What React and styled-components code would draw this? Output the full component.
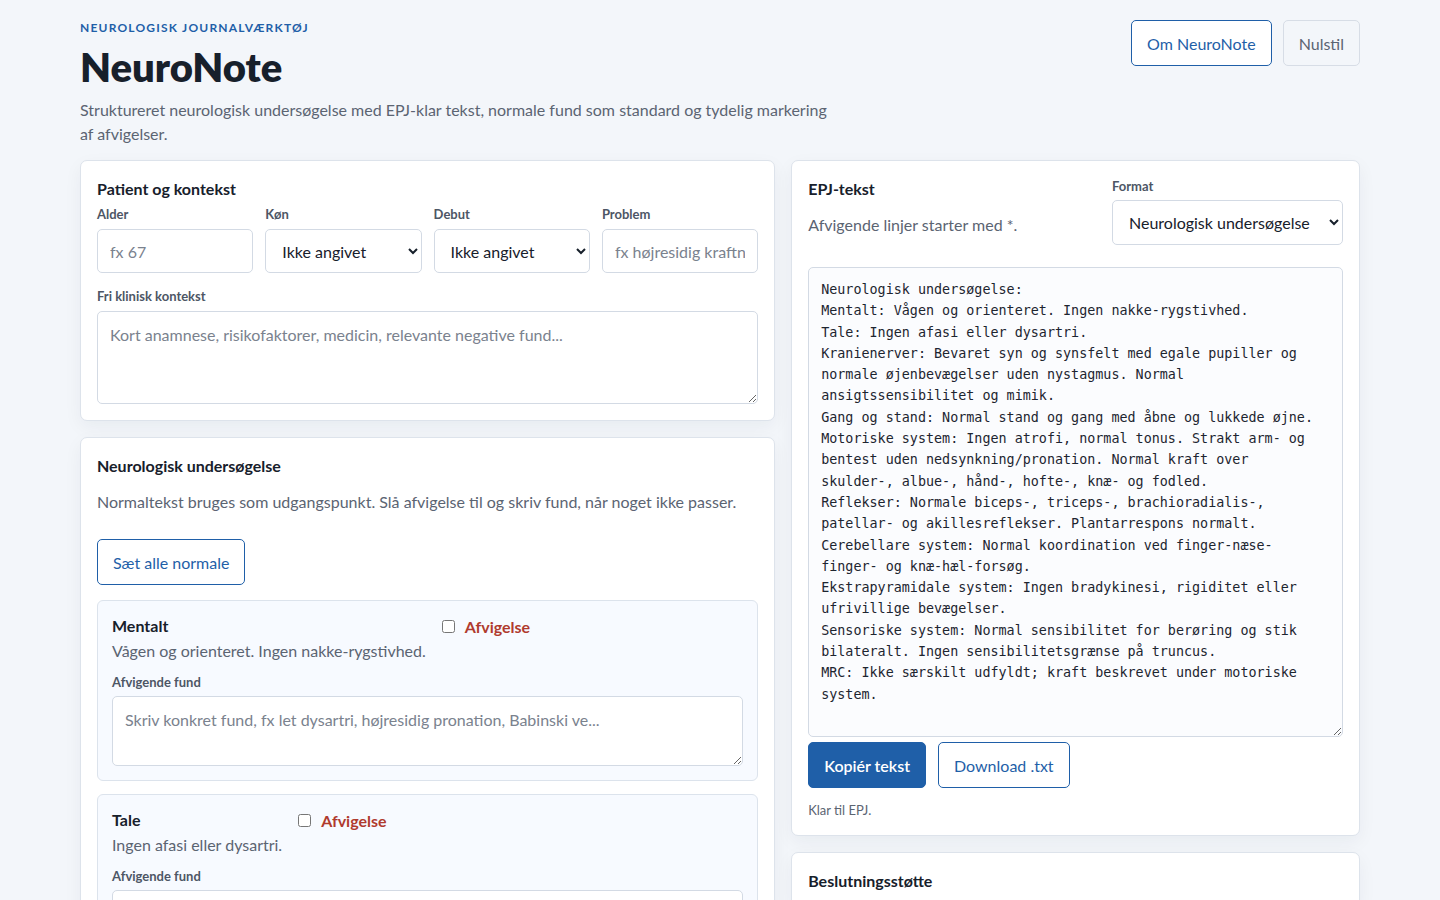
import React from 'react'
import styled, { createGlobalStyle } from 'styled-components'

const GlobalStyle = createGlobalStyle`
    * { box-sizing: border-box; }
    body {
        margin: 0;
        background: #f3f6fa;
        color: #17202b;
        font-family: Lato, "Noto Sans", sans-serif;
    }
`

const Page = styled.div`
    max-width: 1280px;
    margin: 0 auto;
    padding: 20px 0 40px;
`

const Header = styled.header`
    display: flex;
    justify-content: space-between;
    align-items: flex-start;
    margin-bottom: 14px;
`

const Intro = styled.div`
    max-width: 760px;
`

const Eyebrow = styled.div`
    font-size: 12px;
    line-height: 16px;
    font-weight: 700;
    letter-spacing: 0.1em;
    text-transform: uppercase;
    color: #1f5fa8;
`

const Title = styled.h1`
    margin: 9px 0 0;
    font-size: 40px;
    line-height: 44px;
    font-weight: 800;
    color: #17202b;
`

const Lead = styled.p`
    margin: 9px 0 0;
    font-size: 16px;
    line-height: 24px;
    color: #5b6472;
`

const HeaderActions = styled.div`
    display: flex;
    gap: 11px;
`

const Button = styled.button`
    height: 46px;
    padding: 0 15px;
    border-radius: 5px;
    font-family: inherit;
    font-size: 16px;
    cursor: pointer;
    border: 1px solid ${p => p.$variant === 'ghost' ? '#d7dde6' : '#1f5fa8'};
    background: ${p => p.$variant === 'primary' ? '#1f5fa8' : p.$variant === 'ghost' ? '#f3f6fa' : '#fff'};
    color: ${p => p.$variant === 'primary' ? '#fff' : p.$variant === 'ghost' ? '#5b6472' : '#1f5fa8'};
    font-weight: ${p => p.$variant === 'primary' ? 600 : 400};
`

const Columns = styled.div`
    display: grid;
    grid-template-columns: minmax(0, 1.1fr) minmax(360px, 0.9fr);
    gap: 16px;
    align-items: start;
`

const Stack = styled.div`
    display: flex;
    flex-direction: column;
    gap: 16px;
`

const Card = styled.section`
    background: #fff;
    border: 1px solid #dde3eb;
    border-radius: 7px;
    padding: 16px;
    box-shadow: 0 6px 18px rgba(20, 35, 60, 0.05);
`

const CardTitle = styled.h2`
    margin: 0;
    font-size: 16px;
    line-height: 24px;
    font-weight: 700;
    color: #17202b;
`

const Muted = styled.p`
    margin: ${p => p.$m || '12px 0 0'};
    font-size: ${p => p.$small ? '13px' : '16px'};
    line-height: ${p => p.$small ? '18px' : '24px'};
    color: #5b6472;
`

const FieldGrid = styled.div`
    display: grid;
    grid-template-columns: repeat(4, minmax(0, 1fr));
    gap: 12px;
    margin-top: 4px;
`

const Field = styled.label`
    display: flex;
    flex-direction: column;
    gap: 6px;
    margin-top: ${p => p.$top || '0'};
`

const Label = styled.span`
    font-size: 13px;
    line-height: 18px;
    font-weight: 700;
    color: #4d5665;
`

const Input = styled.input`
    height: 44px;
    padding: 0 12px;
    border: 1px solid #d3dae4;
    border-radius: 5px;
    font-family: inherit;
    font-size: 16px;
    color: #17202b;
    background: #fff;
    &::placeholder { color: #7a828e; }
`

const Select = styled.select`
    height: ${p => p.$h || '44px'};
    padding: 0 12px;
    border: 1px solid #d3dae4;
    border-radius: 5px;
    font-family: inherit;
    font-size: 16px;
    color: #17202b;
    background: #fff;
`

const TextArea = styled.textarea`
    display: block;
    width: 100%;
    height: ${p => p.$h};
    padding: 12px;
    border: 1px solid #d3dae4;
    border-radius: 5px;
    font-family: inherit;
    font-size: 16px;
    line-height: 22px;
    color: #17202b;
    background: #fff;
    resize: vertical;
    &::placeholder { color: #7a828e; }
`

const Output = styled(TextArea)`
    font-family: "DejaVu Sans Mono", "Liberation Mono", monospace;
    font-size: 13.4px;
    line-height: 21.3px;
    background: #fbfcfe;
    color: #1d2530;
    padding: 11px 20px 11px 12px;
`

const Finding = styled.div`
    background: #f7faff;
    border: 1px solid #dce3ec;
    border-radius: 6px;
    padding: 13px 14px 14px;
    margin-top: ${p => p.$top || '14px'};
`

const FindingHead = styled.div`
    display: flex;
    align-items: flex-start;
    gap: 16px;
`

const FindingName = styled.div`
    font-size: 16px;
    line-height: 24px;
    font-weight: 700;
    color: #17202b;
`

const FindingNormal = styled.div`
    font-size: 16px;
    line-height: 25px;
    color: #5b6472;
`

const Deviation = styled.label`
    display: flex;
    align-items: center;
    gap: 10px;
    height: 24px;
    font-size: 16px;
    font-weight: 700;
    color: #b03a2e;
    input { margin: 0; width: 13px; height: 13px; }
`

const FindingField = styled(Field)`
    margin-top: 10px;
    gap: 5px;
`

const EpjHead = styled.div`
    display: flex;
    justify-content: space-between;
    align-items: flex-start;
    margin-bottom: 22px;
`

const FormatBox = styled.label`
    display: flex;
    flex-direction: column;
    gap: 5px;
    width: 231px;
`

const ButtonRow = styled.div`
    display: flex;
    gap: 12px;
    margin-top: 5px;
`

const epj = `Neurologisk undersøgelse:
Mentalt: Vågen og orienteret. Ingen nakke-rygstivhed.
Tale: Ingen afasi eller dysartri.
Kranienerver: Bevaret syn og synsfelt med egale pupiller og normale øjenbevægelser uden nystagmus. Normal ansigtssensibilitet og mimik.
Gang og stand: Normal stand og gang med åbne og lukkede øjne.
Motoriske system: Ingen atrofi, normal tonus. Strakt arm- og bentest uden nedsynkning/pronation. Normal kraft over skulder-, albue-, hånd-, hofte-, knæ- og fodled.
Reflekser: Normale biceps-, triceps-, brachioradialis-, patellar- og akillesreflekser. Plantarrespons normalt.
Cerebellare system: Normal koordination ved finger-næse-finger- og knæ-hæl-forsøg.
Ekstrapyramidale system: Ingen bradykinesi, rigiditet eller ufrivillige bevægelser.
Sensoriske system: Normal sensibilitet for berøring og stik bilateralt. Ingen sensibilitetsgrænse på truncus.
MRC: Ikke særskilt udfyldt; kraft beskrevet under motoriske system.`

const findings = [
    { name: 'Mentalt', normal: 'Vågen og orienteret. Ingen nakke-rygstivhed.' },
    { name: 'Tale', normal: 'Ingen afasi eller dysartri.' },
]

const App = () => (
    <>
        <GlobalStyle />
        <Page>
            <Header>
                <Intro>
                    <Eyebrow>Neurologisk journalværktøj</Eyebrow>
                    <Title>NeuroNote</Title>
                    <Lead>
                        Struktureret neurologisk undersøgelse med EPJ-klar tekst, normale fund som standard og tydelig markering af afvigelser.
                    </Lead>
                </Intro>
                <HeaderActions>
                    <Button>Om NeuroNote</Button>
                    <Button $variant="ghost">Nulstil</Button>
                </HeaderActions>
            </Header>

            <Columns>
                <Stack>
                    <Card>
                        <CardTitle>Patient og kontekst</CardTitle>
                        <FieldGrid>
                            <Field>
                                <Label>Alder</Label>
                                <Input placeholder="fx 67" />
                            </Field>
                            <Field>
                                <Label>Køn</Label>
                                <Select defaultValue="na">
                                    <option value="na">Ikke angivet</option>
                                </Select>
                            </Field>
                            <Field>
                                <Label>Debut</Label>
                                <Select defaultValue="na">
                                    <option value="na">Ikke angivet</option>
                                </Select>
                            </Field>
                            <Field>
                                <Label>Problem</Label>
                                <Input placeholder="fx højresidig kraftnedsættelse" />
                            </Field>
                        </FieldGrid>
                        <Field $top="14px">
                            <Label>Fri klinisk kontekst</Label>
                            <TextArea $h="93px" placeholder="Kort anamnese, risikofaktorer, medicin, relevante negative fund..." />
                        </Field>
                    </Card>

                    <Card>
                        <CardTitle>Neurologisk undersøgelse</CardTitle>
                        <Muted>Normaltekst bruges som udgangspunkt. Slå afvigelse til og skriv fund, når noget ikke passer.</Muted>
                        <Button style={{ marginTop: 25 }}>Sæt alle normale</Button>
                        {findings.map((f, i) => (
                            <Finding key={f.name} $top={i === 0 ? '15px' : '13px'}>
                                <FindingHead>
                                    <div>
                                        <FindingName>{f.name}</FindingName>
                                        <FindingNormal>{f.normal}</FindingNormal>
                                    </div>
                                    <Deviation>
                                        <input type="checkbox" />
                                        Afvigelse
                                    </Deviation>
                                </FindingHead>
                                <FindingField>
                                    <Label>Afvigende fund</Label>
                                    <TextArea $h="70px" placeholder="Skriv konkret fund, fx let dysartri, højresidig pronation, Babinski ve..." />
                                </FindingField>
                            </Finding>
                        ))}
                    </Card>
                </Stack>

                <Stack>
                    <Card>
                        <EpjHead>
                            <div>
                                <CardTitle>EPJ-tekst</CardTitle>
                                <Muted>Afvigende linjer starter med *.</Muted>
                            </div>
                            <FormatBox>
                                <Label>Format</Label>
                                <Select $h="45px" defaultValue="neuro">
                                    <option value="neuro">Neurologisk undersøgelse</option>
                                </Select>
                            </FormatBox>
                        </EpjHead>
                        <Output $h="470px" readOnly value={epj} />
                        <ButtonRow>
                            <Button $variant="primary">Kopiér tekst</Button>
                            <Button>Download .txt</Button>
                        </ButtonRow>
                        <Muted $small $m="13px 0 0">Klar til EPJ.</Muted>
                    </Card>
                    <Card>
                        <CardTitle>Beslutningsstøtte</CardTitle>
                    </Card>
                </Stack>
            </Columns>
        </Page>
    </>
)

export default App
